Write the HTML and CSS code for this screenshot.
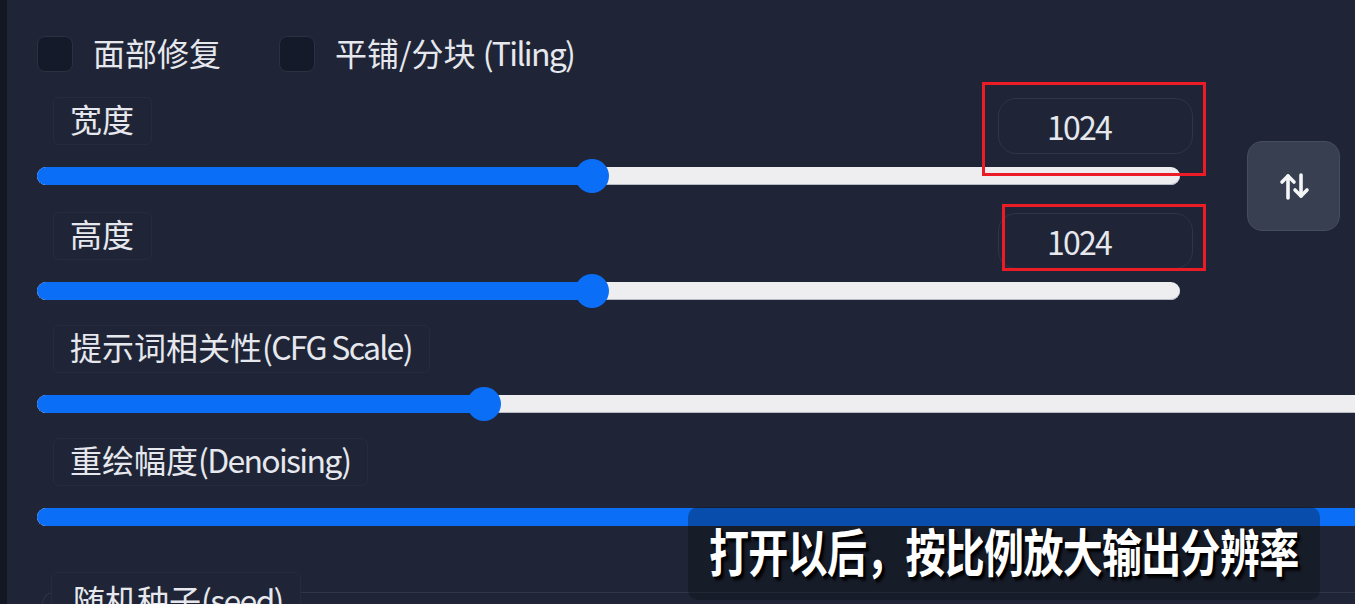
FILE: index.html
```html
<!DOCTYPE html>
<html lang="zh">
<head>
<meta charset="utf-8">
<title>Settings</title>
<link rel="stylesheet" href="styles.css">
</head>
<body>
<div class="app">
  <div class="strip"></div>
  <main class="main">
    <div class="checks">
      <label class="check"><span class="box"></span><span class="ctext">面部修复</span></label>
      <label class="check"><span class="box"></span><span class="ctext">平铺/分块 <span class="lat">(Tiling)</span></span></label>
    </div>

    <div class="dims">
      <div class="dimcol">
        <div class="dim">
          <div class="row">
            <span class="lbl">宽度</span>
            <div class="num">1024</div>
          </div>
          <div class="slider short">
            <div class="track"><div class="fill" style="width:555px"></div><span class="thumb" style="left:555px"></span></div>
          </div>
        </div>
        <div class="dim">
          <div class="row">
            <span class="lbl">高度</span>
            <div class="num">1024</div>
          </div>
          <div class="slider short">
            <div class="track"><div class="fill" style="width:555px"></div><span class="thumb" style="left:555px"></span></div>
          </div>
        </div>
      </div>
      <button class="swap" type="button" aria-label="swap">
        <svg width="32" height="28" viewBox="0 0 32 28" fill="none" stroke="#f4f5f7" stroke-width="3.6" stroke-linecap="round" stroke-linejoin="round">
          <path d="M10 26V4"/><path d="M4 10l6-6 6 6"/>
          <path d="M23 3v21"/><path d="M17 18l6 6 6-6"/>
        </svg>
      </button>
    </div>

    <div class="block">
      <div class="row"><span class="lbl">提示词相关性<span class="lat">(CFG Scale)</span></span></div>
      <div class="slider long">
        <div class="track"><div class="fill" style="width:447px"></div><span class="thumb" style="left:447px"></span></div>
      </div>
    </div>

    <div class="block">
      <div class="row"><span class="lbl">重绘幅度<span class="lat">(Denoising)</span></span></div>
      <div class="slider long">
        <div class="track"><div class="fill" style="width:1400px"></div></div>
      </div>
    </div>

    <div class="seed">
      <span class="lbl seedlbl">随机种子<span class="lat">(seed)</span></span>
    </div>
  </main>
</div>

<div class="mark mark1"></div>
<div class="mark mark2"></div>

<div class="subtitle"><span class="subtext">打开以后，按比例放大输出分辨率</span></div>
</body>
</html>
```

FILE: styles.css
```css
* { box-sizing: border-box; }
html, body {
  margin: 0;
  padding: 0;
  width: 1355px;
  height: 604px;
  overflow: hidden;
  background: #1f2536;
  font-family: "Noto Sans CJK SC", "Noto Sans", sans-serif;
  color: #e6e8ee;
}
.app {
  display: flex;
  height: 604px;
}
.strip {
  width: 7px;
  flex: none;
  background: #131722;
}
.main {
  flex: 1;
  padding: 36px 0 0 30px;
  overflow: hidden;
  min-width: 0;
}
.lat {
  letter-spacing: -1.7px;
}
.checks {
  display: flex;
  gap: 58px;
  height: 36px;
}
.check {
  display: flex;
  align-items: center;
  gap: 20px;
  font-size: 32px;
  line-height: 36px;
}
.ctext {
  padding-bottom: 5px;
}
.box {
  width: 36px;
  height: 36px;
  border-radius: 8px;
  background: #141a2a;
  border: 1px solid #2b3141;
  flex: none;
}
.dims {
  display: flex;
  gap: 54px;
  margin-top: 25px;
}
.dimcol {
  width: 1156px;
  display: flex;
  flex-direction: column;
  gap: 19px;
}
.row {
  display: flex;
  justify-content: space-between;
  align-items: flex-start;
  height: 48px;
}
.lbl {
  display: inline-flex;
  align-items: center;
  height: 48px;
  padding: 0 17px 6px 16px;
  margin-left: 16px;
  border: 1px solid #262c3c;
  border-radius: 6px;
  font-size: 32px;
  line-height: 1;
  white-space: nowrap;
}
.num {
  width: 195px;
  height: 56px;
  margin-top: 1px;
  border: 1px solid #2f3546;
  border-radius: 18px;
  padding-left: 48px;
  display: flex;
  align-items: center;
  font-size: 32px;
  letter-spacing: -1.8px;
}
.slider {
  height: 34px;
  margin-top: 14px;
  display: flex;
  align-items: center;
}
.slider.short { width: 1143px; }
.slider.long { width: 1400px; }
.track {
  position: relative;
  width: 100%;
  height: 18px;
  border-radius: 9px;
  background: #eeeef1;
  box-shadow: inset 0 -1px 0 #b9bbc4;
}
.fill {
  height: 100%;
  border-radius: 9px;
  background: #0b6ef6;
}
.thumb {
  position: absolute;
  top: 50%;
  width: 34px;
  height: 34px;
  border-radius: 50%;
  background: #0b6ef6;
  transform: translate(-50%, -50%);
}
.swap {
  width: 93px;
  height: 90px;
  margin-top: 44px;
  flex: none;
  border-radius: 15px;
  background: #373f50;
  border: 1px solid #454d5d;
  display: flex;
  align-items: center;
  justify-content: center;
  padding: 0;
}
.block {
  margin-top: 17px;
}
.seed {
  margin-top: 58px;
  margin-left: 5px;
  height: 60px;
  border-top: 1px solid #30364a;
  border-left: 1px solid #30364a;
  border-radius: 12px 0 0 0;
}
.seedlbl {
  margin-top: -21px;
  margin-left: 8px;
  padding: 0 17px 0 21px;
  background: #1f2536;
  align-items: flex-end;
  line-height: 40px;
}
.mark {
  position: absolute;
  border: 3px solid #ec1c26;
}
.mark1 { left: 982px; top: 82px; width: 224px; height: 94px; }
.mark2 { left: 1002px; top: 204px; width: 204px; height: 67px; }
.subtitle {
  position: absolute;
  left: 688px;
  top: 507px;
  width: 632px;
  height: 93px;
  border-radius: 10px;
  background: rgba(6, 8, 14, 0.32);
  padding: 19px 0 0 21px;
}
.subtext {
  display: inline-block;
  font-size: 40px;
  font-weight: 700;
  letter-spacing: -0.7px;
  line-height: 48px;
  color: #ffffff;
  transform: scaleY(1.28);
  transform-origin: left center;
  text-shadow: 2px 2px 0 #000, 3px 3px 2px rgba(0,0,0,0.8);
  white-space: nowrap;
}
```
